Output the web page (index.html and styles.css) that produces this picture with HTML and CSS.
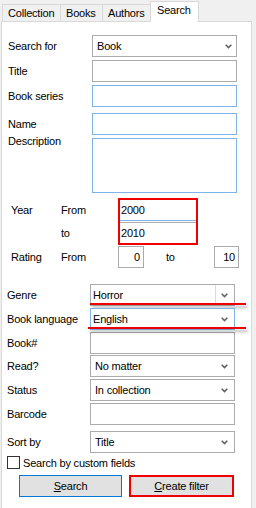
FILE: index.html
```html
<!DOCTYPE html>
<html lang="en">
<head>
    <meta charset="UTF-8">
    <title>Search</title>
    <link rel="stylesheet" href="styles.css">
</head>
<body>

    <div class="tabs">
        <div class="tab tab-collection">Collection</div>
        <div class="tab tab-books">Books</div>
        <div class="tab tab-authors">Authors</div>
        <div class="tab tab-search active">Search</div>
    </div>

    <div class="panel">
        <div class="top">
            <div class="row row-searchfor">
                <span class="lbl">Search for</span>
                <div class="select wide"><span>Book</span><svg class="arrow" width="7" height="5" viewBox="0 0 7 5"><path d="M0.7 0.7 L3.5 3.6 L6.3 0.7" fill="none" stroke="#606060" stroke-width="1.5"/></svg></div>
            </div>
            <div class="row row-title">
                <span class="lbl">Title</span>
                <div class="input wide"></div>
            </div>
            <div class="row row-series">
                <span class="lbl">Book series</span>
                <div class="input wide blue"></div>
            </div>
            <div class="row row-name">
                <span class="lbl">Name</span>
                <div class="input wide blue"></div>
            </div>
            <div class="row row-desc">
                <span class="lbl">Description</span>
                <div class="input wide blue textarea"></div>
            </div>

            <div class="year">
                <span class="y-lbl">Year</span>
                <span class="y-from">From</span>
                <div class="input year-in year-in1 blue">2000</div>
                <span class="y-to">to</span>
                <div class="input year-in year-in2">2010</div>
                <div class="mark-box"></div>
            </div>

            <div class="row row-rating">
                <span class="r-lbl">Rating</span>
                <span class="r-from">From</span>
                <div class="input num num-from">0</div>
                <span class="r-to">to</span>
                <div class="input num num-to">10</div>
            </div>
        </div>

        <div class="bottom">
            <div class="row row-genre">
                <span class="lbl">Genre</span>
                <div class="select split"><span>Horror</span><i class="sep"></i><svg class="arrow" width="7" height="5" viewBox="0 0 7 5"><path d="M0.7 0.7 L3.5 3.6 L6.3 0.7" fill="none" stroke="#606060" stroke-width="1.5"/></svg>
                    <span class="mark-line"></span>
                </div>
            </div>
            <div class="row row-lang">
                <span class="lbl">Book language</span>
                <div class="select blue edit"><span>English</span><svg class="arrow" width="7" height="5" viewBox="0 0 7 5"><path d="M0.7 0.7 L3.5 3.6 L6.3 0.7" fill="none" stroke="#606060" stroke-width="1.5"/></svg>
                    <span class="mark-line mark-line2"></span>
                </div>
            </div>
            <div class="row row-booknum">
                <span class="lbl">Book#</span>
                <div class="input"></div>
            </div>
            <div class="row row-read">
                <span class="lbl">Read?</span>
                <div class="select"><span>No matter</span><svg class="arrow" width="7" height="5" viewBox="0 0 7 5"><path d="M0.7 0.7 L3.5 3.6 L6.3 0.7" fill="none" stroke="#606060" stroke-width="1.5"/></svg></div>
            </div>
            <div class="row row-status">
                <span class="lbl">Status</span>
                <div class="select"><span>In collection</span><svg class="arrow" width="7" height="5" viewBox="0 0 7 5"><path d="M0.7 0.7 L3.5 3.6 L6.3 0.7" fill="none" stroke="#606060" stroke-width="1.5"/></svg></div>
            </div>
            <div class="row row-barcode">
                <span class="lbl">Barcode</span>
                <div class="input"></div>
            </div>
            <div class="row row-sort">
                <span class="lbl">Sort by</span>
                <div class="select"><span>Title</span><svg class="arrow" width="7" height="5" viewBox="0 0 7 5"><path d="M0.7 0.7 L3.5 3.6 L6.3 0.7" fill="none" stroke="#606060" stroke-width="1.5"/></svg></div>
            </div>

            <div class="check-row">
                <span class="checkbox"></span>
                <span>Search by custom fields</span>
            </div>

            <div class="buttons">
                <div class="btn btn-search"><u>S</u>earch</div>
                <div class="btn btn-create"><u>C</u>reate filter</div>
            </div>
        </div>
    </div>

</body>
</html>
```

FILE: styles.css
```css
body {
    margin: 0;
    background-color: #f0f0f0;
    font-family: "Liberation Sans", Arial, sans-serif;
    font-size: 11px;
    letter-spacing: -0.2px;
    color: #000;
    overflow: hidden;
}
.tabs {
    display: flex;
    align-items: flex-end;
    height: 21px;
    padding-left: 2px;
    position: relative;
    z-index: 2;
}
.tab {
    box-sizing: border-box;
    height: 17px;
    line-height: 16px;
    padding-left: 5px;
    border: 1px solid #d9d9d9;
    border-bottom: none;
    background-color: #f0f0f0;
    margin-right: -1px;
}
.tab-collection {
    width: 59px;
}
.tab-books {
    width: 43px;
}
.tab-authors {
    width: 49px;
}
.tab-search {
    width: 49px;
    height: 21px;
    line-height: 17px;
    padding-left: 6px;
    margin-bottom: -1px;
    background-color: white;
}
.panel {
    box-sizing: border-box;
    width: 251px;
    height: 500px;
    margin-left: 1px;
    border: 1px solid #d9d9d9;
    background-color: white;
}
.top {
    padding-left: 6px;
}
.bottom {
    padding-left: 5px;
}
.row {
    display: flex;
    align-items: center;
    height: 22px;
}
.lbl {
    width: 84px;
    flex: none;
}
.bottom .lbl {
    width: 83px;
}
.input, .select {
    box-sizing: border-box;
    height: 22px;
    width: 145px;
    border: 1px solid #ababab;
    background-color: white;
    white-space: nowrap;
}
.wide {
    width: 145px;
}
.blue {
    border-color: #7eb4ea;
}
.select {
    position: relative;
    display: flex;
    align-items: center;
    padding-left: 4px;
    padding-right: 6px;
}
.select span:first-child {
    flex: 1;
}
.select.edit, .select.split {
    padding-left: 2px;
}
.arrow {
    flex: none;
}
.sep {
    width: 1px;
    height: 20px;
    background-color: #d9d9d9;
    margin-right: 5px;
}
.row-searchfor {
    margin-top: 13px;
}
.row-searchfor .select {
    padding-left: 4px;
    padding-right: 4px;
}
.row-title {
    margin-top: 3px;
}
.row-series {
    margin-top: 3px;
}
.row-name {
    margin-top: 6px;
}
.row-desc {
    margin-top: 3px;
    height: 55px;
    align-items: flex-start;
}
.row-desc .lbl {
    margin-top: -3px;
}
.textarea {
    height: 55px;
}
.year {
    display: grid;
    grid-template-columns: 50px 57px 80px;
    grid-template-rows: 22px 22px;
    row-gap: 1px;
    align-items: center;
    margin-top: 6px;
    margin-left: 3px;
}
.y-lbl {
    grid-column: 1;
    grid-row: 1;
}
.y-from {
    grid-column: 2;
    grid-row: 1;
}
.y-to {
    grid-column: 2;
    grid-row: 2;
}
.year-in {
    grid-column: 3;
    width: 80px;
    line-height: 20px;
    padding-left: 2px;
}
.year-in1 {
    grid-row: 1;
}
.year-in2 {
    grid-row: 2;
}
.mark-box {
    grid-column: 3;
    grid-row: 1 / 3;
    align-self: stretch;
    border: 2px solid #f00000;
    margin: -1px 0;
}
.row-rating {
    margin-top: 2px;
    margin-left: 3px;
}
.r-lbl {
    width: 50px;
}
.r-from {
    width: 57px;
}
.num {
    text-align: right;
    line-height: 20px;
    padding-right: 3px;
}
.num-from {
    width: 26px;
}
.r-to {
    width: 48px;
    margin-left: 22px;
}
.num-to {
    width: 25px;
}
.row-genre {
    margin-top: 16px;
}
.row-lang {
    margin-top: 2px;
}
.mark-line {
    position: absolute;
    left: -1px;
    top: 18px;
    width: 156px;
    height: 2px;
    background-color: #f00000;
    box-shadow: 2px 3px 3px rgba(0, 0, 0, 0.3);
}
.mark-line2 {
    left: -3px;
    width: 158px;
}
.row-booknum {
    margin-top: 2px;
}
.row-read {
    margin-top: 1px;
}
.row-status {
    margin-top: 2px;
}
.row-barcode {
    margin-top: 2px;
}
.row-sort {
    margin-top: 6px;
}
.check-row {
    display: flex;
    align-items: center;
    height: 13px;
    margin-top: 3px;
}
.checkbox {
    box-sizing: border-box;
    width: 13px;
    height: 13px;
    border: 1px solid #333;
    margin-right: 3px;
}
.buttons {
    display: flex;
    margin-top: 6px;
    margin-left: 12px;
}
.btn {
    box-sizing: border-box;
    height: 22px;
    line-height: 20px;
    text-align: center;
    background-color: #e1e1e1;
    border: 1px solid #adadad;
}
.btn-search {
    width: 103px;
    border-color: #0078d7;
}
.btn-create {
    width: 105px;
    margin-left: 7px;
    border: 2px solid #f00000;
    line-height: 18px;
}
```
